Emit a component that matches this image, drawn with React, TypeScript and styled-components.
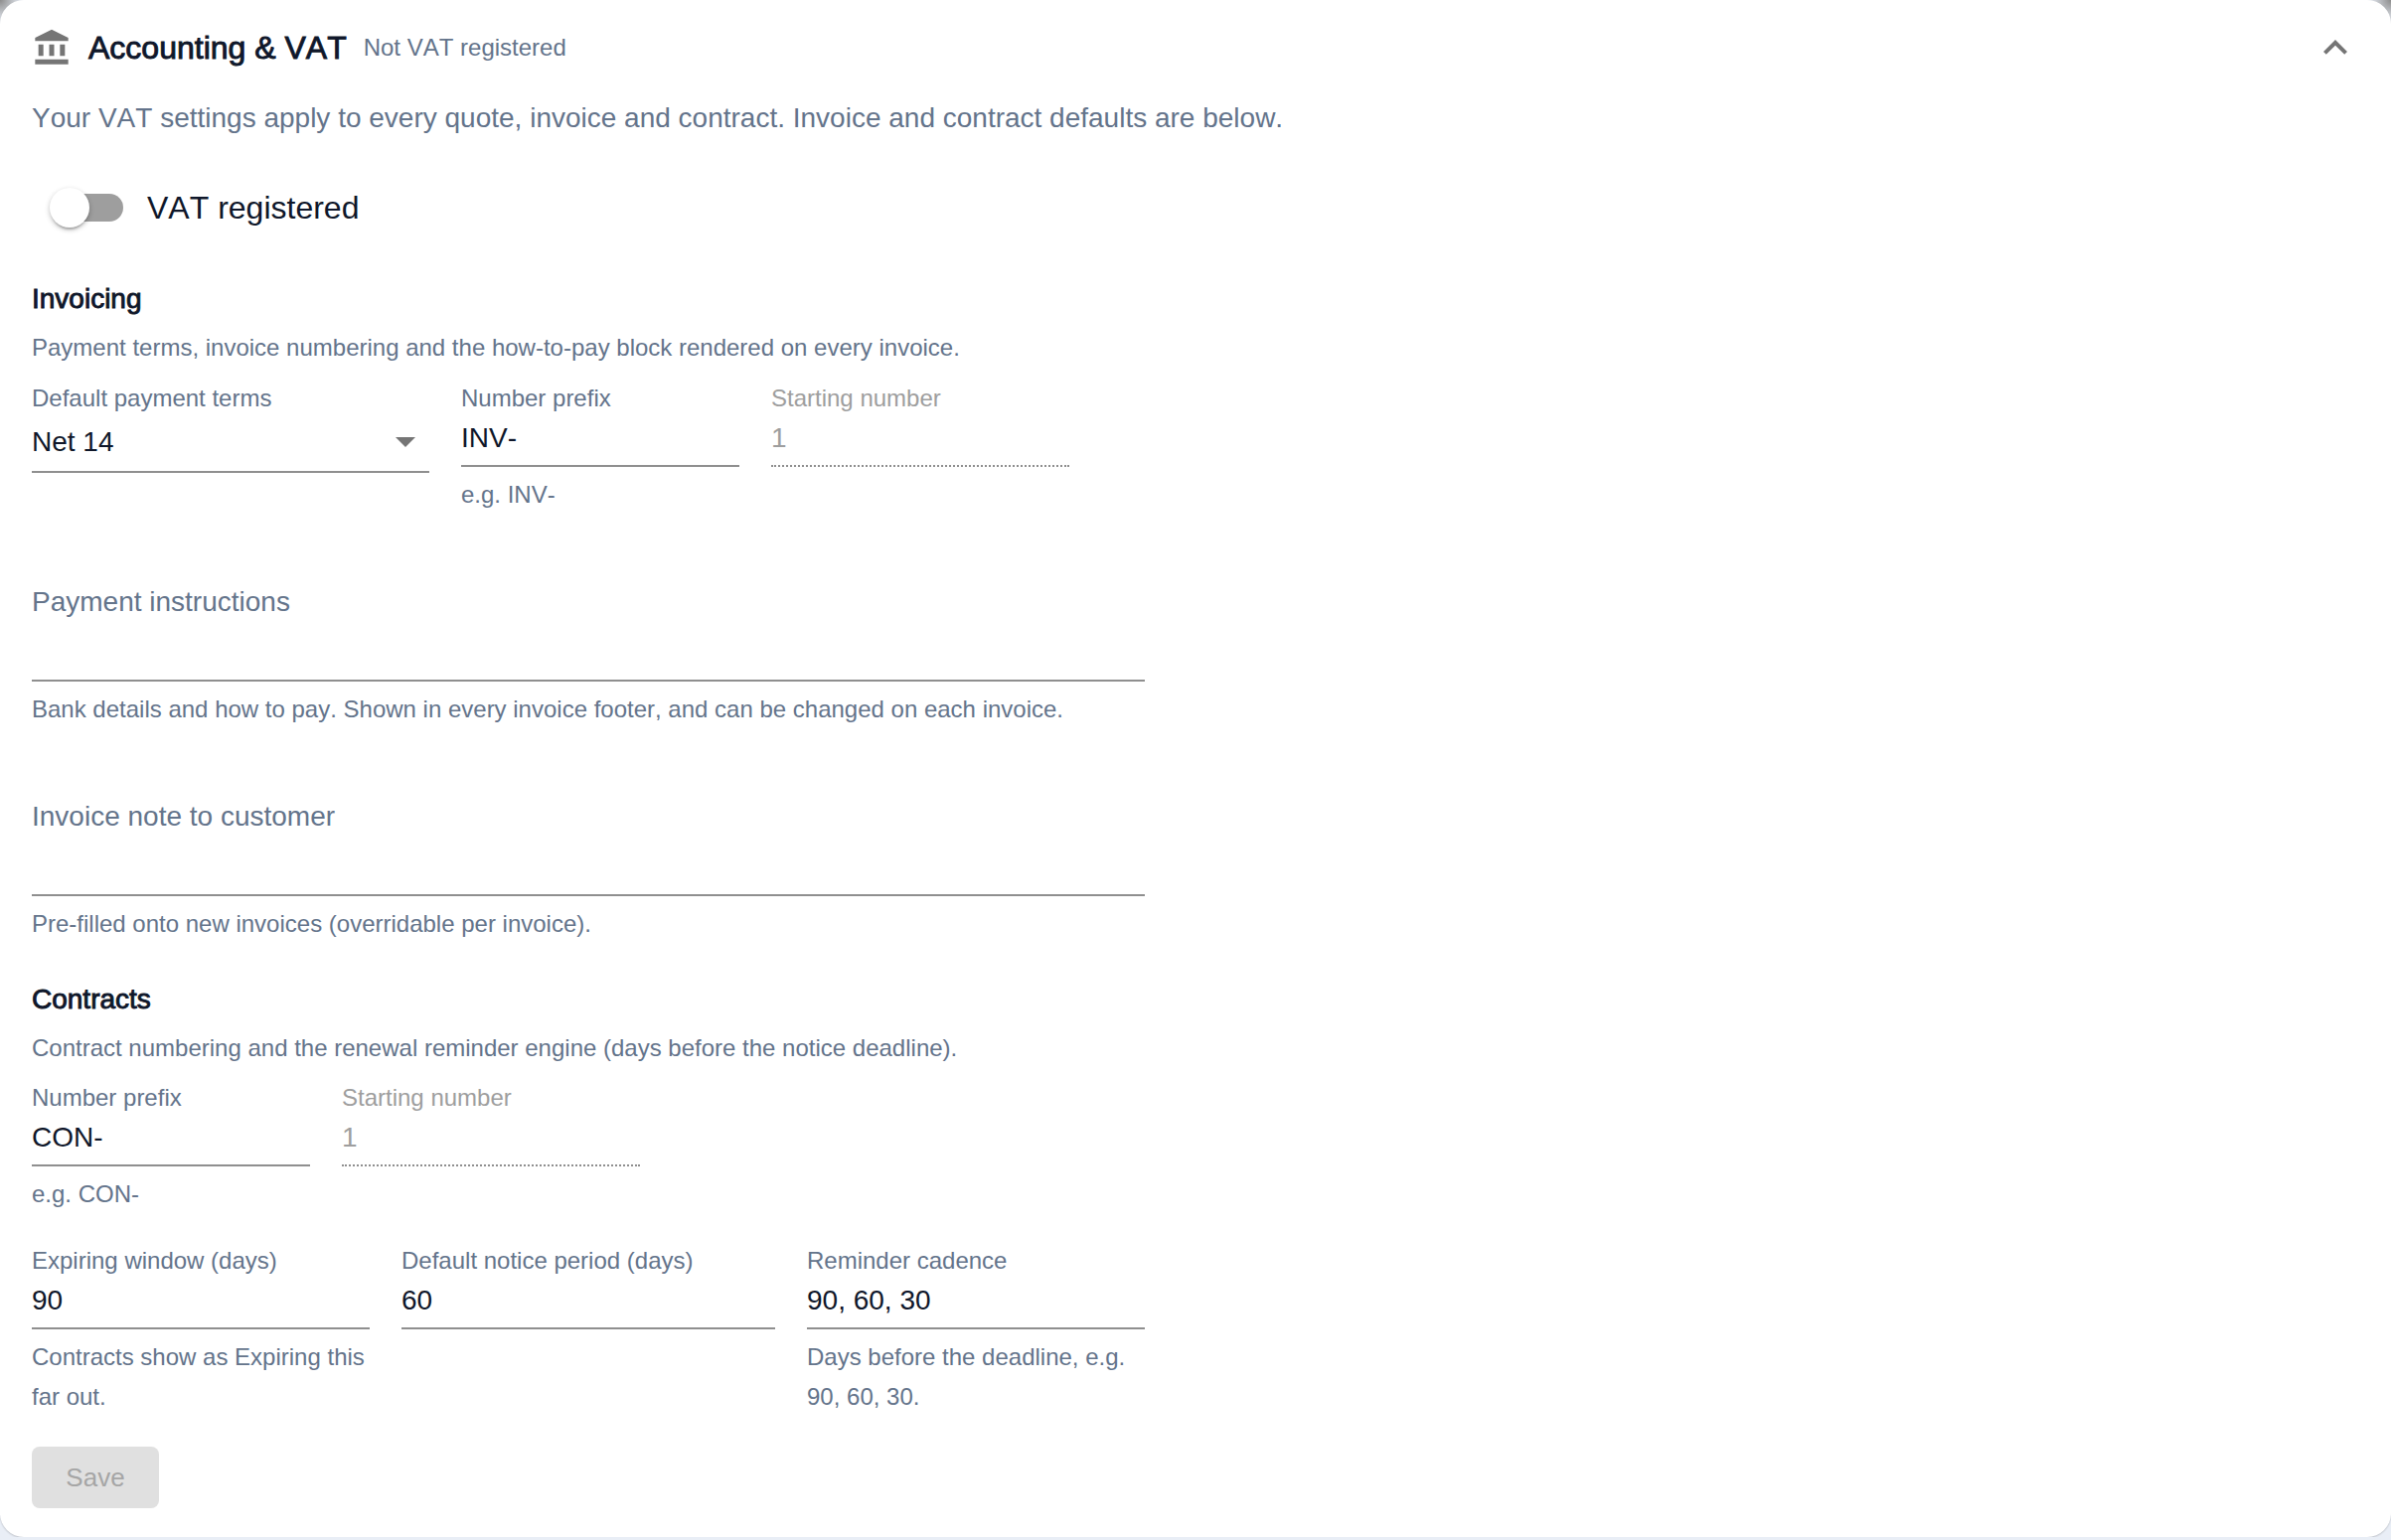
import styled, { createGlobalStyle } from 'styled-components'

const GlobalStyle = createGlobalStyle`
  html, body {
    margin: 0;
    padding: 0;
    font-family: 'Liberation Sans', Arial, sans-serif;
    font-kerning: none;
  }
  html {
    min-height: 1550px;
    background:
      radial-gradient(circle at 0 0, #8c8c8c, #e9eef6 22px) no-repeat 0 0 / 24px 24px,
      radial-gradient(circle at 100% 0, #8c8c8c, #e9eef6 22px) no-repeat 100% 0 / 24px 24px,
      #e9eef6;
  }
  body {
    background: transparent;
  }
  input, button {
    font-kerning: none;
  }
`

const Card = styled.section`
  box-sizing: border-box;
  width: 2406px;
  height: 1547px;
  padding: 0 32px;
  background: #fff;
  border-radius: 24px;
  box-shadow: 0 1px 2px rgba(0, 0, 0, 0.18);
`

const Header = styled.header`
  display: flex;
  align-items: center;
  height: 96px;
`

const BankIcon = styled.svg`
  flex: none;
  width: 40px;
  height: 40px;
  fill: #757575;
`

const Title = styled.h2`
  margin: 0 0 0 17px;
  font-size: 32px;
  font-weight: 400;
  -webkit-text-stroke: 0.9px #0f172a;
  color: #0f172a;
`

const Badge = styled.span`
  margin-left: 17px;
  font-size: 24px;
  color: #64748b;
`

const Chevron = styled.svg`
  flex: none;
  width: 48px;
  height: 48px;
  margin-left: auto;
  fill: #757575;
`

const Intro = styled.p`
  margin: 1px 0 0;
  font-size: 28px;
  line-height: 44px;
  color: #64748b;
`

const SwitchRow = styled.label`
  display: flex;
  align-items: center;
  height: 76px;
  margin-top: 30px;
`

const SwitchBox = styled.span`
  position: relative;
  flex: none;
  width: 116px;
  height: 76px;
`

const Track = styled.span`
  position: absolute;
  left: 24px;
  top: 24px;
  width: 68px;
  height: 28px;
  border-radius: 14px;
  background: #9e9e9e;
`

const Thumb = styled.span`
  position: absolute;
  left: 18px;
  top: 18px;
  width: 40px;
  height: 40px;
  border-radius: 50%;
  background: #fff;
  box-shadow: 0 4px 2px -2px rgba(0, 0, 0, 0.2), 0 2px 4px rgba(0, 0, 0, 0.14), 0 2px 6px rgba(0, 0, 0, 0.12);
`

const SwitchLabel = styled.span`
  font-size: 32px;
  color: #0f172a;
`

const SectionTitle = styled.h3`
  margin: 0;
  font-size: 28px;
  line-height: 40px;
  font-weight: 400;
  -webkit-text-stroke: 0.9px #0f172a;
  color: #0f172a;
`

const SectionText = styled.p`
  margin: 9px 0 0;
  font-size: 24px;
  line-height: 40px;
  color: #64748b;
`

const Section = styled.div<{ $top: number }>`
  margin-top: ${(p) => p.$top}px;
`

const Row = styled.div<{ $top?: number; $height?: number }>`
  display: flex;
  align-items: flex-start;
  gap: 32px;
  margin-top: ${(p) => p.$top ?? 0}px;
  height: ${(p) => (p.$height ? `${p.$height}px` : 'auto')};
`

const Field = styled.div<{ $width: number }>`
  flex: none;
  width: ${(p) => p.$width}px;
`

const FieldLabel = styled.label<{ $disabled?: boolean }>`
  display: block;
  font-size: 24px;
  line-height: 30px;
  color: ${(p) => (p.$disabled ? '#9e9e9e' : '#64748b')};
`

const Input = styled.input<{ $disabled?: boolean }>`
  display: block;
  box-sizing: border-box;
  width: 100%;
  height: 54px;
  padding: 0 0 3px;
  border: 0;
  outline: 0;
  border-bottom: 2px ${(p) => (p.$disabled ? 'dotted' : 'solid')} #8f8f8f;
  background: none;
  font-family: inherit;
  font-size: 28px;
  color: ${(p) => (p.$disabled ? '#9e9e9e' : '#0f172a')};
`

const SelectBox = styled.div`
  display: flex;
  align-items: center;
  justify-content: space-between;
  box-sizing: border-box;
  height: 59px;
  margin-top: 1px;
  padding-bottom: 1px;
  border-bottom: 2px solid #8f8f8f;
  font-size: 28px;
  color: #0f172a;
`

const Caret = styled.span`
  width: 0;
  height: 0;
  margin-right: 14px;
  border-left: 10px solid transparent;
  border-right: 10px solid transparent;
  border-top: 10px solid #757575;
`

const Helper = styled.p`
  margin: 8px 0 0;
  font-size: 24px;
  line-height: 40px;
  color: #64748b;
`

const BlockField = styled.div<{ $top: number }>`
  width: 1120px;
  margin-top: ${(p) => p.$top}px;
`

const BlockLabel = styled.label`
  display: block;
  font-size: 28px;
  line-height: 40px;
  color: #64748b;
`

const BlockLine = styled.div`
  height: 58px;
  border-bottom: 2px solid #8f8f8f;
`

const SaveButton = styled.button`
  display: block;
  width: 128px;
  height: 62px;
  margin-top: 30px;
  border: 0;
  border-radius: 8px;
  background: #e0e0e0;
  font-family: inherit;
  font-size: 26px;
  font-weight: 400;
  color: #a6a6a6;
`

function App () {
  return (
    <>
      <GlobalStyle />
      <Card>
        <Header>
          <BankIcon viewBox='0 0 24 24'>
            <path d='M4 10h3v7H4zm6.5 0h3v7h-3zM2 19h20v3H2zm15-9h3v7h-3zm-5-9L2 6v2h20V6z' />
          </BankIcon>
          <Title>Accounting &amp; VAT</Title>
          <Badge>Not VAT registered</Badge>
          <Chevron viewBox='0 0 24 24'>
            <path d='M7.41 15.41 12 10.83l4.59 4.58L18 14l-6-6-6 6z' />
          </Chevron>
        </Header>
        <Intro>Your VAT settings apply to every quote, invoice and contract. Invoice and contract defaults are below.</Intro>
        <SwitchRow>
          <SwitchBox>
            <Track />
            <Thumb />
          </SwitchBox>
          <SwitchLabel>VAT registered</SwitchLabel>
        </SwitchRow>

        <Section $top={34}>
          <SectionTitle>Invoicing</SectionTitle>
          <SectionText>Payment terms, invoice numbering and the how-to-pay block rendered on every invoice.</SectionText>
          <Row $top={16} $height={148}>
            <Field $width={400}>
              <FieldLabel>Default payment terms</FieldLabel>
              <SelectBox>
                Net 14
                <Caret />
              </SelectBox>
            </Field>
            <Field $width={280}>
              <FieldLabel>Number prefix</FieldLabel>
              <Input defaultValue='INV-' />
              <Helper>e.g. INV-</Helper>
            </Field>
            <Field $width={300}>
              <FieldLabel $disabled>Starting number</FieldLabel>
              <Input $disabled disabled defaultValue='1' />
            </Field>
          </Row>
        </Section>

        <BlockField $top={52}>
          <BlockLabel>Payment instructions</BlockLabel>
          <BlockLine />
          <Helper>Bank details and how to pay. Shown in every invoice footer, and can be changed on each invoice.</Helper>
        </BlockField>
        <BlockField $top={68}>
          <BlockLabel>Invoice note to customer</BlockLabel>
          <BlockLine />
          <Helper>Pre-filled onto new invoices (overridable per invoice).</Helper>
        </BlockField>

        <Section $top={36}>
          <SectionTitle>Contracts</SectionTitle>
          <SectionText>Contract numbering and the renewal reminder engine (days before the notice deadline).</SectionText>
          <Row $top={15}>
            <Field $width={280}>
              <FieldLabel>Number prefix</FieldLabel>
              <Input defaultValue='CON-' />
              <Helper>e.g. CON-</Helper>
            </Field>
            <Field $width={300}>
              <FieldLabel $disabled>Starting number</FieldLabel>
              <Input $disabled disabled defaultValue='1' />
            </Field>
          </Row>
          <Row $top={32}>
            <Field $width={340}>
              <FieldLabel>Expiring window (days)</FieldLabel>
              <Input defaultValue='90' />
              <Helper>Contracts show as Expiring this far out.</Helper>
            </Field>
            <Field $width={376}>
              <FieldLabel>Default notice period (days)</FieldLabel>
              <Input defaultValue='60' />
            </Field>
            <Field $width={340}>
              <FieldLabel>Reminder cadence</FieldLabel>
              <Input defaultValue='90, 60, 30' />
              <Helper>Days before the deadline, e.g. 90, 60, 30.</Helper>
            </Field>
          </Row>
        </Section>
        <SaveButton disabled>Save</SaveButton>
      </Card>
    </>
  )
}

export default App
